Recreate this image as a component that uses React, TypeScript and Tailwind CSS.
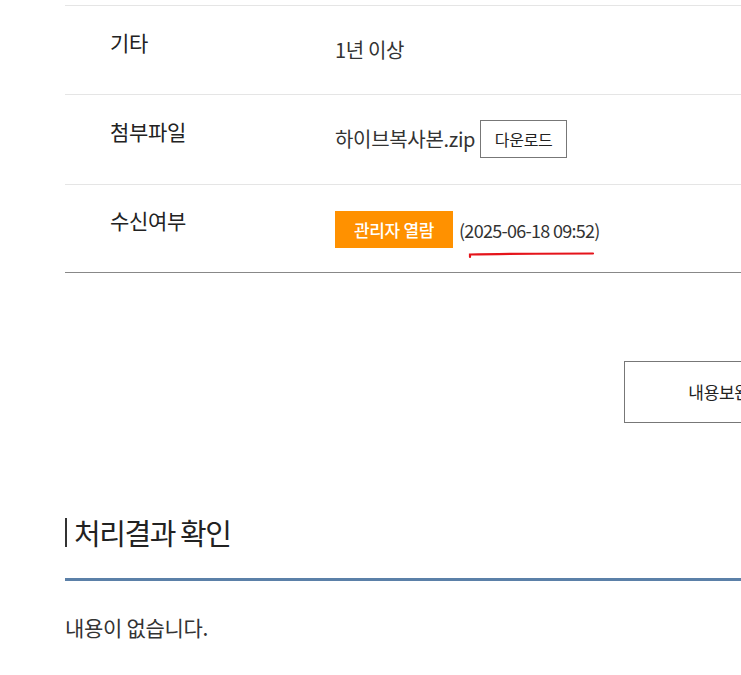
import React from "react";

export default function App() {
  return (
    <div className="relative w-[741px] h-[675px] overflow-hidden bg-white font-['Noto_Sans_CJK_KR','Noto_Sans',sans-serif] tracking-[-0.02em] text-[#222]">
      <div className="w-[1000px] pl-[65px] pt-[5px]">
        {/* table */}
        <div className="border-b border-[#888]">
          <div className="flex h-[89px] border-t border-[#e5e5e5]">
            <div className="w-[270px] shrink-0 pl-[45px] pt-[21px] text-[21px] leading-[30px] text-[#222]">기타</div>
            <div className="pt-[29px] text-[20px] leading-[30px] text-[#333]">1년 이상</div>
          </div>
          <div className="flex h-[90px] border-t border-[#e5e5e5]">
            <div className="w-[270px] shrink-0 pl-[45px] pt-[21px] text-[21px] leading-[30px] text-[#222]">첨부파일</div>
            <div className="flex items-center gap-[5px] self-start pt-[25px]">
              <span className="text-[20px] leading-[30px] text-[#333]">하이브복사본.zip</span>
              <button className="flex h-[38px] w-[87px] items-center justify-center border border-[#777] bg-white text-[16px] text-[#222]">
                다운로드
              </button>
            </div>
          </div>
          <div className="flex h-[88px] border-t border-[#e5e5e5]">
            <div className="w-[270px] shrink-0 pl-[45px] pt-[20px] text-[21px] leading-[30px] text-[#222]">수신여부</div>
            <div className="flex items-center gap-[6px] self-start pt-[26px]">
              <span className="flex h-[37px] w-[118px] items-center justify-center bg-[#ff9100] text-[17px] font-medium text-white">
                관리자 열람
              </span>
              <span className="text-[18px] leading-[30px] tracking-[-0.04em] text-[#333]">(2025-06-18 09:52)</span>
            </div>
          </div>
        </div>

        {/* action button */}
        <div className="mt-[88px] flex pl-[559px]">
          <button className="flex h-[62px] w-[190px] items-center justify-center border border-[#777] bg-white text-[17px] text-[#222]">
            내용보완
          </button>
        </div>

        {/* section heading */}
        <div className="mt-[91px] flex h-[36px] items-center">
          <span className="h-[29px] w-[2px] bg-[#333]" />
          <h2 className="ml-[7px] text-[29px] leading-[36px] font-normal tracking-[-0.05em] text-[#222]">처리결과 확인</h2>
        </div>
        <div className="mt-[28px] h-[3px] bg-[#5b80a8]" />
        <p className="mt-[31px] text-[21px] leading-[30px] text-[#333]">내용이 없습니다.</p>
      </div>

      {/* red annotation underline */}
      <svg className="absolute left-[468px] top-[251px]" width="128" height="8" viewBox="0 0 128 8">
        <path d="M2 6 L2 3.5 Q40 2.5 125 2.5" fill="none" stroke="#e5141b" strokeWidth="2.2" strokeLinecap="round" />
      </svg>
    </div>
  );
}
